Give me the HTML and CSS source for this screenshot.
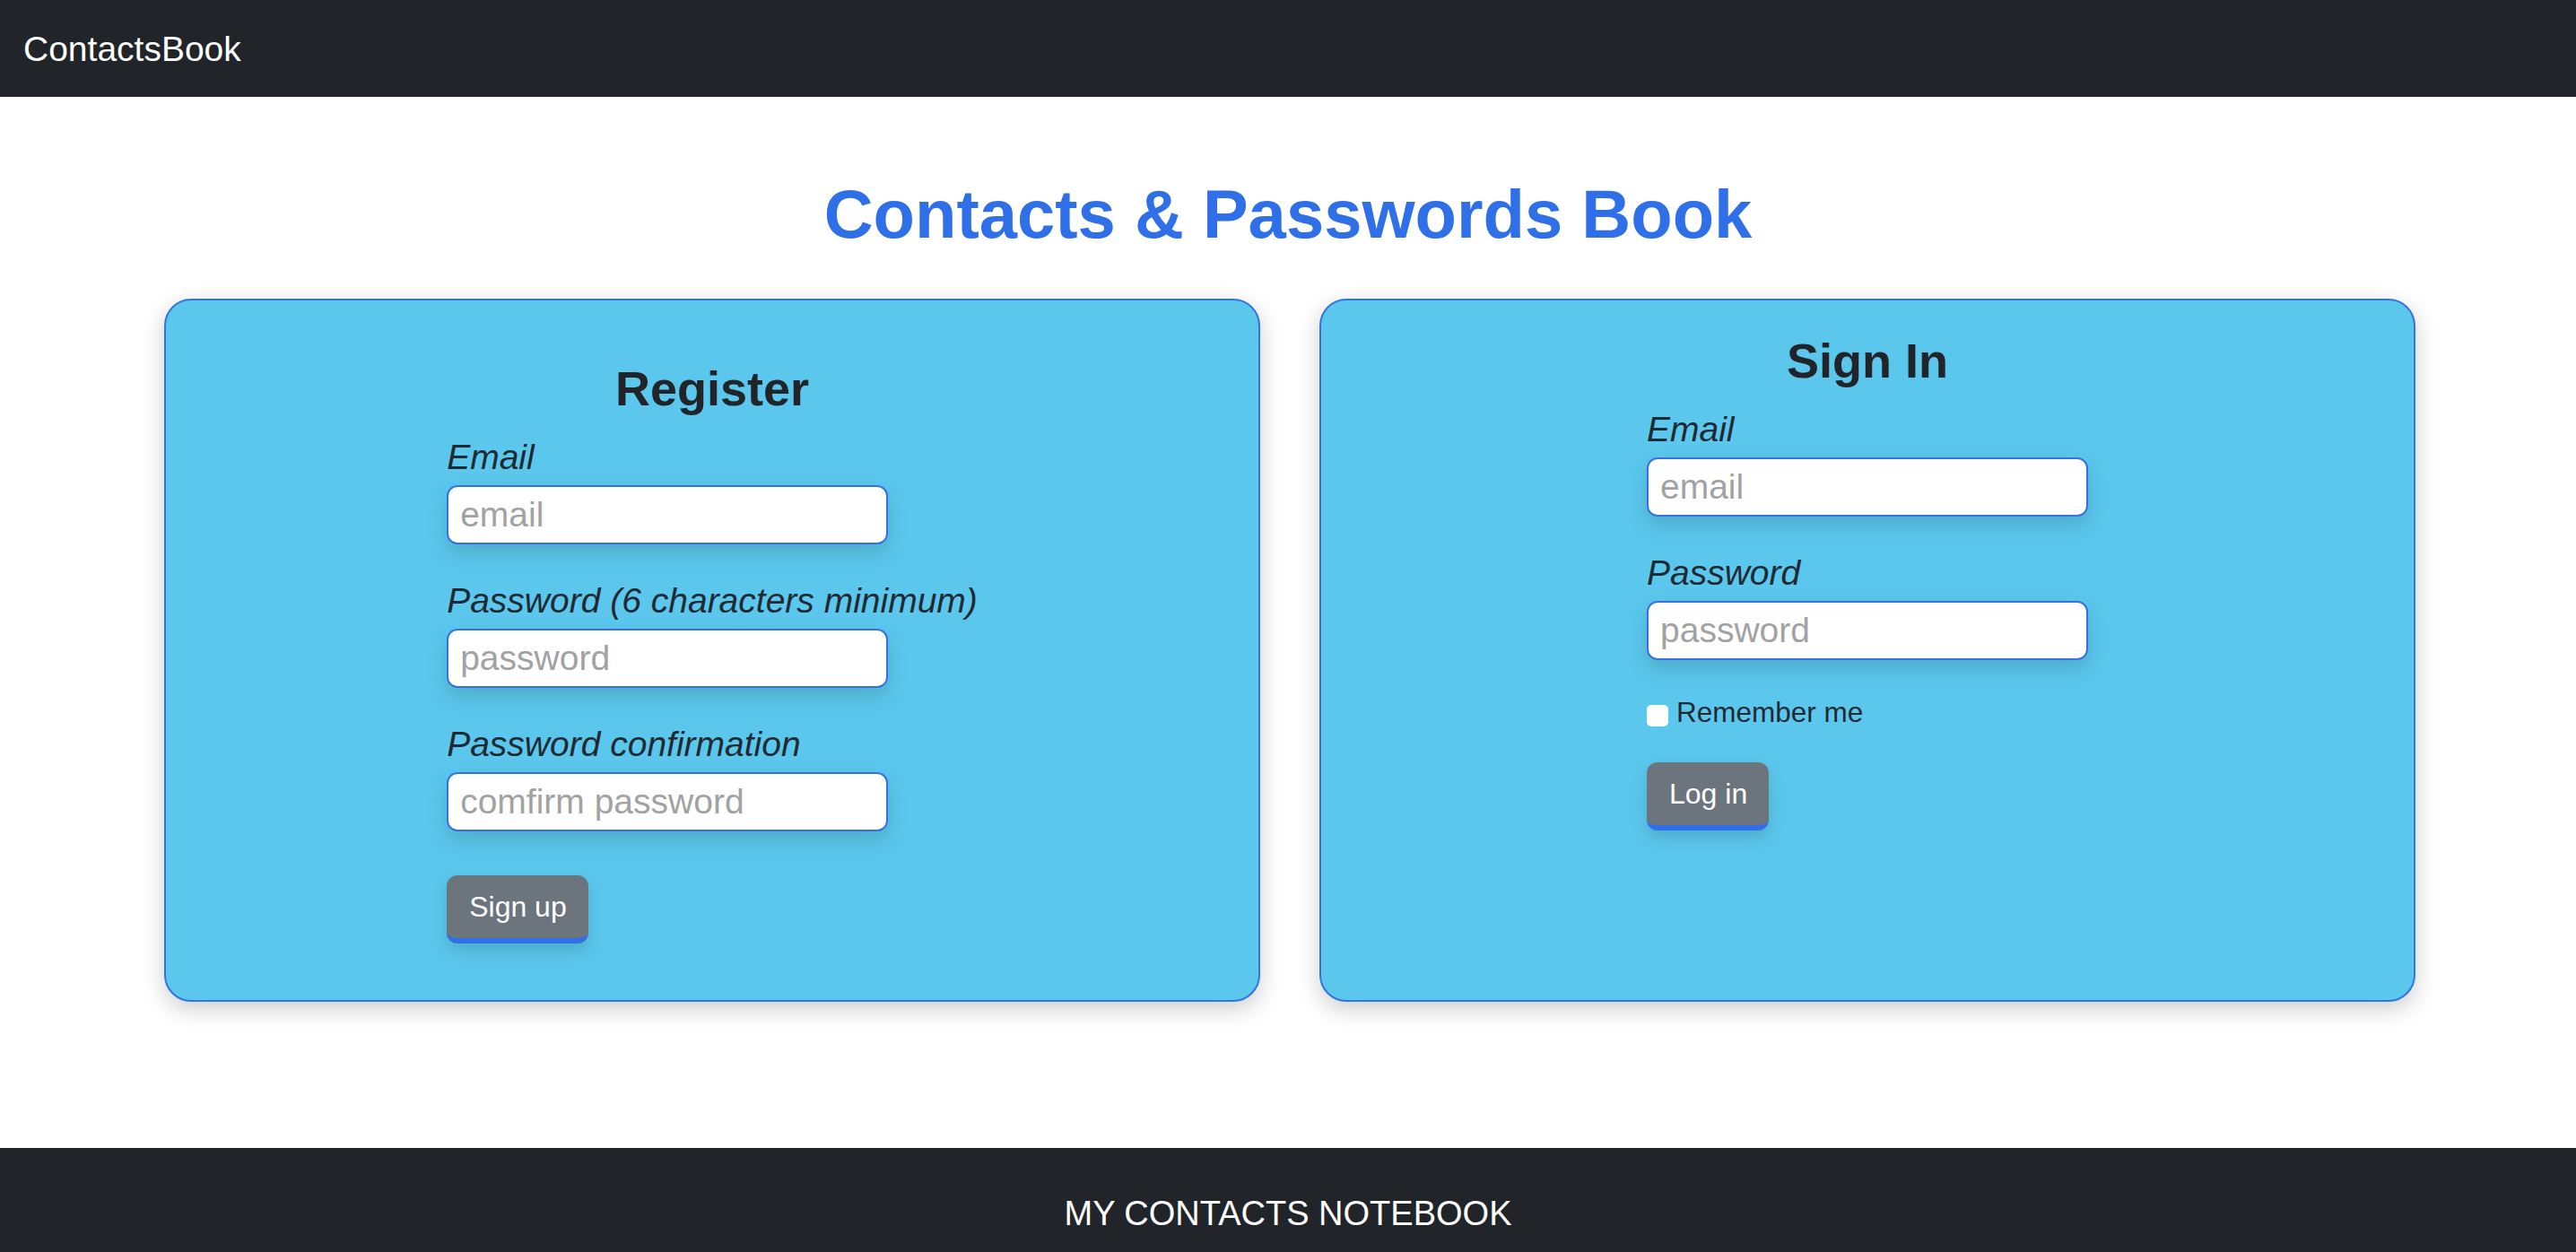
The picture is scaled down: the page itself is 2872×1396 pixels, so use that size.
FILE: index.html
```html
<!DOCTYPE html>
<html lang="en">
<head>
<meta charset="utf-8">
<title>ContactsBook</title>
<link rel="stylesheet" href="styles.css">
</head>
<body>
<nav class="navbar"><a class="brand" href="#">ContactsBook</a></nav>
<main class="main">
  <h1 class="title">Contacts &amp; Passwords Book</h1>
  <div class="cards">
    <section class="card card-register">
      <h2 class="card-title">Register</h2>
      <form class="form">
        <div class="field">
          <label class="label">Email</label>
          <input class="input" type="email" placeholder="email">
        </div>
        <div class="field">
          <label class="label">Password (6 characters minimum)</label>
          <input class="input" type="password" placeholder="password">
        </div>
        <div class="field">
          <label class="label">Password confirmation</label>
          <input class="input" type="password" placeholder="comfirm password">
        </div>
        <div class="actions actions-register">
          <button class="btn" type="button">Sign up</button>
        </div>
      </form>
    </section>
    <section class="card card-signin">
      <h2 class="card-title">Sign In</h2>
      <form class="form">
        <div class="field">
          <label class="label">Email</label>
          <input class="input" type="email" placeholder="email">
        </div>
        <div class="field">
          <label class="label">Password</label>
          <input class="input" type="password" placeholder="password">
        </div>
        <label class="remember"><input class="check" type="checkbox"><span>Remember me</span></label>
        <div class="actions actions-signin">
          <button class="btn" type="button">Log in</button>
        </div>
      </form>
    </section>
  </div>
</main>
<footer class="footer">MY CONTACTS NOTEBOOK</footer>
</body>
</html>
```
FILE: styles.css
```css
* { box-sizing: border-box; }
html, body { margin: 0; padding: 0; }
body {
  font-family: "Liberation Sans", Arial, sans-serif;
  color: #212529;
  background: #ffffff;
  min-height: 100vh;
  display: flex;
  flex-direction: column;
  overflow: hidden;
}
.navbar {
  height: 108px;
  background: #212529;
  display: flex;
  align-items: center;
  padding: 2px 26px 0;
}
.brand {
  color: #ffffff;
  text-decoration: none;
  font-size: 39px;
  line-height: 50px;
}
.main {
  flex: 1;
  display: flex;
  flex-direction: column;
}
.title {
  margin: 85px 0 49px;
  text-align: center;
  font-size: 76px;
  line-height: 1.2;
  font-weight: 700;
  color: #2f6fe7;
}
.cards {
  width: 100%;
  padding: 0 179px 0 183px;
  display: flex;
  gap: 66px;
  align-items: stretch;
}
.card {
  flex: 1;
  background: #5bc7ec;
  border: 2px solid #3474e0;
  border-radius: 30px;
  box-shadow: 0 8px 26px rgba(0, 0, 0, 0.2);
  display: flex;
  flex-direction: column;
  align-items: center;
  padding-bottom: 63px;
}
.card-register { padding-top: 66px; }
.card-signin { padding-top: 35px; }
.card-title {
  margin: 0 0 19px;
  font-size: 54px;
  line-height: 1.2;
  font-weight: 700;
  color: #212529;
}
.form {
  width: fit-content;
  display: flex;
  flex-direction: column;
  align-items: flex-start;
}
.field { display: flex; flex-direction: column; }
.field + .field { margin-top: 38px; }
.label {
  display: block;
  font-style: italic;
  font-size: 39px;
  line-height: 50px;
  margin-bottom: 6px;
  color: #1f2a33;
}
.input {
  width: 492px;
  height: 66px;
  border: 2px solid #3572e0;
  border-radius: 12px;
  background: #ffffff;
  padding: 0 13px;
  font-family: "Liberation Sans", Arial, sans-serif;
  font-size: 39px;
  color: #212529;
  box-shadow: 0 10px 22px rgba(0, 0, 0, 0.14);
  outline: none;
}
.input::placeholder { color: #a2a2a2; }
.remember {
  margin-top: 34px;
  display: flex;
  align-items: center;
  font-size: 31.5px;
  line-height: 48px;
  color: #1f2a33;
}
.check {
  appearance: none;
  -webkit-appearance: none;
  width: 24px;
  height: 24px;
  margin: 8px 9px 0 0;
  background: #ffffff;
  border-radius: 5px;
  border: none;
}
.actions-register { margin-top: 49px; }
.actions-signin { margin-top: 32px; }
.btn {
  font-family: "Liberation Sans", Arial, sans-serif;
  font-size: 32px;
  line-height: 48px;
  padding: 11px 24px 11px 25px;
  color: #ffffff;
  background: #6c757d;
  border: none;
  border-bottom: 6px solid #2f6fe7;
  border-radius: 12px;
  box-shadow: 0 8px 18px rgba(0, 0, 0, 0.14);
  cursor: pointer;
}
.footer {
  height: 116px;
  background: #212529;
  color: #ffffff;
  text-align: center;
  font-size: 38px;
  line-height: 50px;
  padding-top: 48px;
}
```
